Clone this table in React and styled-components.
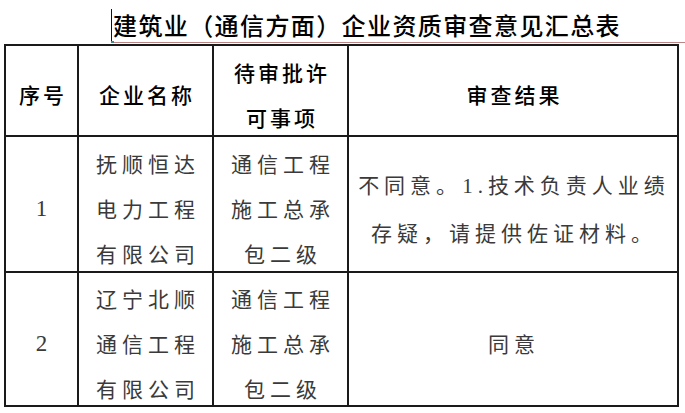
import styled, { createGlobalStyle } from "styled-components";

const CJK = `"Noto Sans CJK SC", "Noto Sans", sans-serif`;
const SERIF = `"Liberation Serif", "Noto Sans CJK SC", serif`;
const LINE = "#1a1a1a";

const rows = [
  {
    no: "1",
    company: ["抚顺恒达", "电力工程", "有限公司"],
    item: ["通信工程", "施工总承", "包二级"],
    result: "reject",
  },
  {
    no: "2",
    company: ["辽宁北顺", "通信工程", "有限公司"],
    item: ["通信工程", "施工总承", "包二级"],
    result: "ok",
  },
];

function App() {
  return (
    <Page>
      <GlobalStyle />
      <TitleBar>
        <TitleLine>
          <Caret />
          <Title>建筑业（通信方面）企业资质审查意见汇总表</Title>
        </TitleLine>
      </TitleBar>
      <Grid>
        <Head>序号</Head>
        <Head>企业名称</Head>
        <Head>
          <Line>待审批许</Line>
          <Line>可事项</Line>
        </Head>
        <Head>审查结果</Head>

        {rows.map((r) => [
          <Cell key={r.no + "a"} $serif>
            {r.no}
          </Cell>,
          <Cell key={r.no + "b"}>
            {r.company.map((t) => (
              <Line key={t}>{t}</Line>
            ))}
          </Cell>,
          <Cell key={r.no + "c"}>
            {r.item.map((t) => (
              <Line key={t}>{t}</Line>
            ))}
          </Cell>,
          <Cell key={r.no + "d"} $wide>
            {r.result === "reject" ? (
              <>
                <Line>
                  不同意。<Num>1.</Num>技术负责人业绩
                </Line>
                <Line>存疑，请提供佐证材料。</Line>
              </>
            ) : (
              <Line>同意</Line>
            )}
          </Cell>,
        ])}
      </Grid>
    </Page>
  );
}

export default App;

const GlobalStyle = createGlobalStyle`
  html, body {
    margin: 0;
    padding: 0;
    background: #ffffff;
  }
  body {
    font-family: ${CJK};
  }
`;

const Page = styled.div`
  width: 685px;
  height: 413px;
  overflow: hidden;
  background: #ffffff;
`;

const TitleBar = styled.div`
  padding-left: 111px;
  margin-bottom: 1px;
`;

const TitleLine = styled.div`
  height: 43px;
  box-sizing: border-box;
  border-bottom: 1px solid #b98585;
  display: flex;
  align-items: flex-end;
`;

const Caret = styled.span`
  position: relative;
  width: 1px;
  height: 33px;
  background: #111;
  flex: none;
  &::after {
    content: "";
    position: absolute;
    left: 0;
    bottom: -1px;
    width: 3px;
    height: 2px;
    background: #3c8c8c;
  }
`;

const Title = styled.h1`
  margin: 0 0 1px 1px;
  font-family: ${CJK};
  font-size: 24px;
  font-weight: 500;
  letter-spacing: 1.4px;
  line-height: 32px;
  color: #000;
  white-space: nowrap;
`;

const Grid = styled.div`
  margin-left: 4px;
  width: 675px;
  box-sizing: border-box;
  display: grid;
  grid-template-columns: 73px 135px 135px 330px;
  grid-template-rows: 91px 136px 134px;
  border-left: 2px solid ${LINE};
  border-top: 2px solid ${LINE};
`;

const Cell = styled.div`
  box-sizing: border-box;
  border-right: 2px solid ${LINE};
  border-bottom: 2px solid ${LINE};
  display: flex;
  flex-direction: column;
  align-items: center;
  justify-content: center;
  padding: ${(p) => (p.$serif ? "8px 0 0 0" : p.$wide ? "8px 0 0 2px" : "8px 0 0 5px")};
  font-family: ${(p) => (p.$serif ? SERIF : CJK)};
  font-size: ${(p) => (p.$serif ? "23px" : "21px")};
  letter-spacing: ${(p) => (p.$serif ? "0" : "5px")};
  color: #3a3a3a;
  line-height: ${(p) => (p.$wide ? "46px" : "45px")};
  white-space: nowrap;
`;

const Head = styled(Cell)`
  color: #000;
  font-weight: 500;
  letter-spacing: 3px;
  padding: 8px 0 0 3px;
  font-size: 21px;
`;

const Line = styled.span`
  display: block;
`;

const Num = styled.span`
  font-family: ${SERIF};
  font-size: 21px;
`;
